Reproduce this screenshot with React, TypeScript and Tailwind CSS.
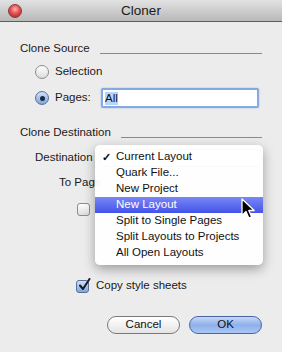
import React from "react";

const font = { fontFamily: '"Liberation Sans", Arial, sans-serif' };

const Radio = ({ on = false, faint = false }: { on?: boolean; faint?: boolean }) => (
  <div
    className={`flex h-[14px] w-[14px] shrink-0 items-center justify-center rounded-full border ${
      on
        ? "border-[#5a6f9a] bg-gradient-to-b from-[#cfe0f8] to-[#7fa6de]"
        : "border-[#8c8c8c] bg-gradient-to-b from-[#ffffff] to-[#dcdcdc]"
    } ${faint ? "opacity-10" : ""}`}
  >
    {on && <div className="h-[5px] w-[5px] rounded-full bg-[#1d2a44]" />}
  </div>
);

const Checkbox = ({ on = false }: { on?: boolean }) => (
  <div
    className={`relative h-[13px] w-[13px] shrink-0 rounded-[3px] border ${
      on
        ? "border-[#5a6f9a] bg-gradient-to-b from-[#cfe0f8] to-[#7fa6de]"
        : "border-[#8c8c8c] bg-gradient-to-b from-[#ffffff] to-[#dedede]"
    }`}
  >
    {on && (
      <svg className="absolute -top-[3px] left-[1px]" width="13" height="14" viewBox="0 0 13 14">
        <path d="M2 7.5 L5 11 L11.5 1" fill="none" stroke="#1a1a1a" strokeWidth="2" strokeLinecap="round" strokeLinejoin="round" />
      </svg>
    )}
  </div>
);

const SectionHead = ({ label }: { label: string }) => (
  <div className="flex h-[14px] items-center">
    <span className="text-[11.5px] leading-none text-[#1a1a1a]">{label}</span>
    <div className="ml-[10px] mt-[8px] flex-1 border-b border-[#8a8a8a]" />
  </div>
);

const items = [
  "Current Layout",
  "Quark File...",
  "New Project",
  "New Layout",
  "Split to Single Pages",
  "Split Layouts to Projects",
  "All Open Layouts",
];

const Menu = () => (
  <div className="absolute left-[95px] top-[145px] w-[168px] rounded-[5px] bg-white/95 py-[4px] shadow-[0_4px_12px_rgba(0,0,0,0.35)]">
    {items.map((t, i) => (
      <div
        key={t}
        className={`relative flex h-[16px] items-center pl-[21px] text-[11.5px] leading-none ${
          i === 3
            ? "bg-gradient-to-b from-[#7a86f6] to-[#4453e8] text-white"
            : "text-[#111]"
        }`}
      >
        {i === 0 && <span className="absolute left-[7px] text-[11px] font-bold">✓</span>}
        {t}
      </div>
    ))}
  </div>
);

const Cursor = () => (
  <svg className="absolute left-[240px] top-[197px]" width="16" height="24" viewBox="0 0 16 24">
    <path
      d="M2 2 L2 18.5 L6 14.5 L8.8 21 L11.6 19.8 L8.8 13.5 L14.2 13.5 Z"
      fill="#000"
      stroke="#fff"
      strokeWidth="1.3"
      strokeLinejoin="round"
    />
  </svg>
);

export default function App() {
  return (
    <div className="relative h-[352px] w-[282px] overflow-hidden bg-[#ececec]" style={font}>
      {/* title bar */}
      <div className="relative flex h-[22px] items-center justify-center border-b border-[#5e5e5e] bg-gradient-to-b from-[#e2e2e2] to-[#b9b9b9]">
        <div className="absolute left-[8px] top-[4px] h-[14px] w-[14px] rounded-full border border-[#8b3a3a] bg-[radial-gradient(circle_at_50%_35%,#ffb0b0_0%,#e25252_45%,#a41d1d_100%)]" />
        <span className="text-[13.5px] leading-none text-[#1a1a1a]">Cloner</span>
      </div>

      <div className="flex flex-col px-[20px]">
        <div className="mt-[20px]">
          <SectionHead label="Clone Source" />
        </div>

        <div className="ml-[15px] mt-[8px] flex h-[16px] items-center gap-[6px]">
          <Radio />
          <span className="text-[11.5px] leading-none text-[#1a1a1a]">Selection</span>
        </div>

        <div className="ml-[15px] mt-[8px] flex h-[20px] items-center">
          <Radio on />
          <span className="ml-[6px] w-[46px] text-[11.5px] leading-none text-[#1a1a1a]">Pages:</span>
          <div className="flex h-[20px] w-[158px] items-center rounded-[2px] border-2 border-[#86a9e0] bg-white px-[2px] shadow-[0_0_2px_#9bbcf0]">
            <span className="bg-[#b5d5ff] text-[11.5px] leading-[13px] text-[#111]">All</span>
          </div>
        </div>

        <div className="mt-[18px]">
          <SectionHead label="Clone Destination" />
        </div>

        <div className="mt-[9px] flex h-[18px] items-center">
          <span className="w-[77px] pl-[15px] text-[11.5px] leading-none text-[#1a1a1a]">Destination</span>
          <div className="ml-[3px] h-[18px] flex-1 rounded-[4px] border border-[#9a9a9a] bg-white" />
        </div>

        <div className="mt-[7px] flex h-[18px] items-center">
          <span className="pl-[39px] text-[11.5px] leading-none text-[#1a1a1a]">To Page</span>
          <span className="ml-[95px] text-[11.5px] leading-none text-[#c8c8c8]">Pages</span>
        </div>

        <div className="ml-[57px] mt-[10px] flex h-[14px] items-center">
          <Checkbox />
        </div>

        <div className="ml-[76px] mt-[13px] flex h-[14px] items-center">
          <Radio on faint />
        </div>
        <div className="ml-[76px] mt-[6px] flex h-[14px] items-center">
          <Radio faint />
        </div>

        <div className="ml-[56px] mt-[16px] flex h-[14px] items-center gap-[7px]">
          <Checkbox on />
          <span className="text-[11.5px] leading-none text-[#1a1a1a]">Copy style sheets</span>
        </div>

        <div className="mt-[23px] flex justify-end gap-[9px]">
          <button className="flex h-[18px] w-[73px] items-center justify-center rounded-full border border-[#7a7a7a] bg-gradient-to-b from-[#ffffff] to-[#e4e4e4] text-[11.5px] leading-none text-[#111]">
            Cancel
          </button>
          <button className="flex h-[18px] w-[73px] items-center justify-center rounded-full border border-[#4a64a8] bg-gradient-to-b from-[#c6d8f6] via-[#8fb0ea] to-[#a9c6f5] text-[11.5px] leading-none text-[#111]">
            OK
          </button>
        </div>
      </div>

      <Menu />
      <Cursor />
    </div>
  );
}
